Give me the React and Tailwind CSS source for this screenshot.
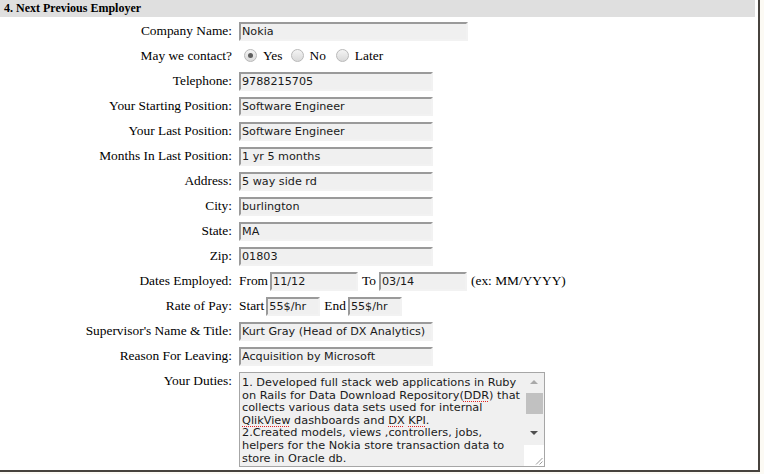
import React from "react";

function Field({ w, v }) {
  return (
    <div
      className={`${w} h-[19px] border-2 border-t-[#9a9a9a] border-l-[#9a9a9a] border-r-[#f2f2f2] border-b-[#f2f2f2] bg-[#f0f0f0] pl-px pt-px font-['DejaVu_Sans',sans-serif] text-[11.2px] leading-[14px] text-[#1a1a1a] whitespace-nowrap overflow-hidden`}
    >
      {v}
    </div>
  );
}

function Radio({ checked }) {
  return (
    <span className="flex h-[13px] w-[13px] items-center justify-center rounded-full border border-[#b9b9b9] bg-gradient-to-b from-[#f4f4f4] to-[#d9d9d9] -mt-[2px]">
      {checked ? <span className="h-[5px] w-[5px] rounded-full bg-[#5e5e5e]" /> : null}
    </span>
  );
}

function Row({ label, children }) {
  return (
    <div className="flex h-[25px] items-center">
      <div className="w-[232px] text-right whitespace-nowrap">{label}</div>
      <div className="ml-[7px] flex items-center">{children}</div>
    </div>
  );
}

const sp = "underline decoration-dotted decoration-[#e02424] underline-offset-[2px]";

export default function App() {
  return (
    <div className="h-[474px] w-[764px] bg-[#fcfaf4] font-['Liberation_Serif',serif] text-[13.4px] text-black">
      <div className="h-[472px] w-[760px] border-r-2 border-b-2 border-[#47433e] bg-white">
        <div className="h-[17px] w-[755px] bg-[#dfdfdf] pl-[4px] text-[12px] font-bold leading-[17px]">
          4. Next Previous Employer
        </div>
        <div className="mt-[2px] flex flex-col">
          <Row label="Company Name:">
            <Field w="w-[229px]" v="Nokia" />
          </Row>
          <Row label="May we contact?">
            <span className="ml-[5px]"><Radio checked /></span>
            <span className="ml-[6px]">Yes</span>
            <span className="ml-[9px]"><Radio /></span>
            <span className="ml-[5px]">No</span>
            <span className="ml-[10px]"><Radio /></span>
            <span className="ml-[6px]">Later</span>
          </Row>
          <Row label="Telephone:">
            <Field w="w-[194px]" v="9788215705" />
          </Row>
          <Row label="Your Starting Position:">
            <Field w="w-[194px]" v="Software Engineer" />
          </Row>
          <Row label="Your Last Position:">
            <Field w="w-[194px]" v="Software Engineer" />
          </Row>
          <Row label="Months In Last Position:">
            <Field w="w-[194px]" v="1 yr 5 months" />
          </Row>
          <Row label="Address:">
            <Field w="w-[194px]" v="5 way side rd" />
          </Row>
          <Row label="City:">
            <Field w="w-[194px]" v="burlington" />
          </Row>
          <Row label="State:">
            <Field w="w-[194px]" v="MA" />
          </Row>
          <Row label="Zip:">
            <Field w="w-[194px]" v="01803" />
          </Row>
          <Row label="Dates Employed:">
            <span>From</span>
            <span className="ml-[2px]"><Field w="w-[88px]" v="11/12" /></span>
            <span className="ml-[4px]">To</span>
            <span className="ml-[3px]"><Field w="w-[88px]" v="03/14" /></span>
            <span className="ml-[4px]">(ex: MM/YYYY)</span>
          </Row>
          <Row label="Rate of Pay:">
            <span>Start</span>
            <span className="ml-[2px]"><Field w="w-[54px]" v="55$/hr" /></span>
            <span className="ml-[4px]">End</span>
            <span className="ml-[2px]"><Field w="w-[54px]" v="55$/hr" /></span>
          </Row>
          <Row label="Supervisor's Name & Title:">
            <Field w="w-[194px]" v="Kurt Gray (Head of DX Analytics)" />
          </Row>
          <Row label="Reason For Leaving:">
            <Field w="w-[194px]" v="Acquisition by Microsoft" />
          </Row>
          <div className="flex items-start pt-[3px]">
            <div className="w-[232px] pt-[1px] text-right leading-[15px]">Your Duties:</div>
            <div className="ml-[7px] flex h-[95px] w-[306px] border border-[#a6a6a6] bg-[#f0f0f0]">
              <div className="flex-1 overflow-hidden pl-[2px] pt-[4px] font-['DejaVu_Sans',sans-serif] text-[11.3px] leading-[12.6px] text-[#1a1a1a] whitespace-nowrap">
                <div>1. Developed full stack web applications in Ruby</div>
                <div>on Rails for Data Download Repository(<span className={sp}>DDR</span>) that</div>
                <div>collects various data sets used for internal</div>
                <div><span className={sp}>QlikView</span> dashboards and <span className={sp}>DX</span> <span className={sp}>KPI</span>.</div>
                <div>2.Created models, views ,controllers, jobs,</div>
                <div>helpers for the Nokia store transaction data to</div>
                <div>store in Oracle db.</div>
              </div>
              <div className="flex w-[20px] flex-col">
                <div className="flex h-[17px] items-center justify-center">
                  <span className="h-0 w-0 border-x-[4px] border-b-[4px] border-x-transparent border-b-[#a9a9a9]" />
                </div>
                <div className="h-[35px] px-[1px] pt-[3px]">
                  <div className="ml-[1px] h-[21px] w-[17px] bg-[#c1c1c1]" />
                </div>
                <div className="flex h-[20px] items-start justify-center pt-[6px]">
                  <span className="h-0 w-0 border-x-[4px] border-t-[4px] border-x-transparent border-t-[#505050]" />
                </div>
                <div className="relative flex-1 bg-white">
                  <svg className="absolute bottom-[1px] right-[1px]" width="9" height="9" viewBox="0 0 9 9">
                    <line x1="8.5" y1="2" x2="2" y2="8.5" stroke="#9a9a9a" strokeWidth="1" />
                    <line x1="8.5" y1="5.5" x2="5.5" y2="8.5" stroke="#9a9a9a" strokeWidth="1" />
                  </svg>
                </div>
              </div>
            </div>
          </div>
        </div>
      </div>
    </div>
  );
}
